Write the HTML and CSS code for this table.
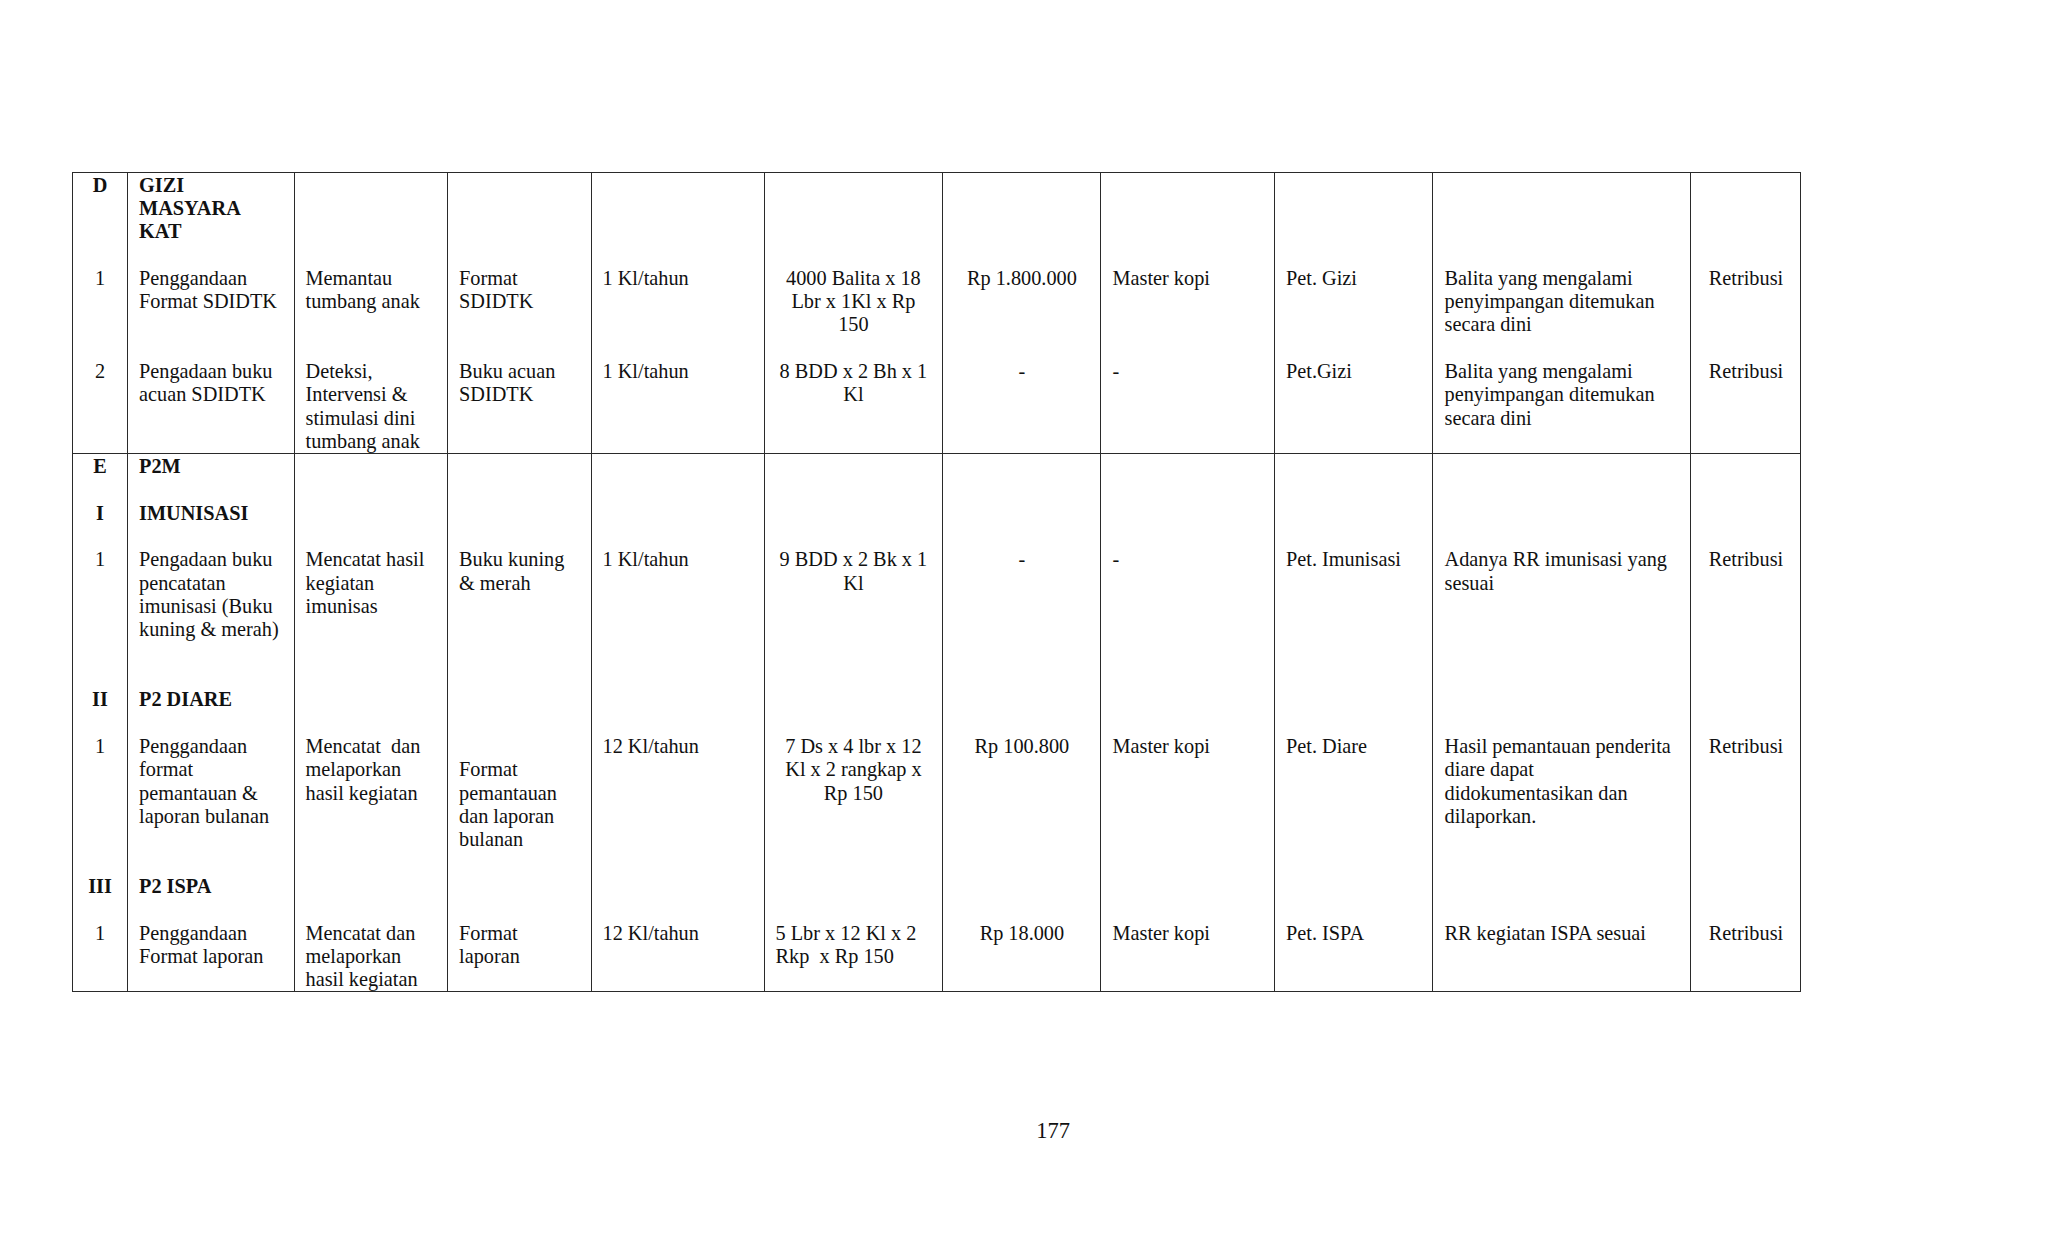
FILE: index.html
```html
<!DOCTYPE html>
<html lang="id">
<head>
<meta charset="utf-8">
<title>177</title>
<link rel="stylesheet" href="styles.css">
</head>
<body>
<div class="page">
<table class="plan">
<colgroup>
<col class="w1"><col class="w2"><col class="w3"><col class="w4"><col class="w5"><col class="w6"><col class="w7"><col class="w8"><col class="w9"><col class="w10"><col class="w11">
</colgroup>
<tbody>
<tr class="row-d">
<td class="c"><b>D</b><br><br><br><br>1<br><br><br><br>2</td>
<td><b>GIZI<br>MASYARA<br>KAT</b><br><br>Penggandaan<br>Format SDIDTK<br><br><br>Pengadaan buku<br>acuan SDIDTK</td>
<td><br><br><br><br>Memantau<br>tumbang anak<br><br><br>Deteksi,<br>Intervensi &amp;<br>stimulasi dini<br>tumbang anak</td>
<td><br><br><br><br>Format<br>SDIDTK<br><br><br>Buku acuan<br>SDIDTK</td>
<td><br><br><br><br>1 Kl/tahun<br><br><br><br>1 Kl/tahun</td>
<td class="c"><br><br><br><br>4000 Balita x 18<br>Lbr x 1Kl x Rp<br>150<br><br>8 BDD x 2 Bh x 1<br>Kl</td>
<td class="c"><br><br><br><br>Rp 1.800.000<br><br><br><br>-</td>
<td><br><br><br><br>Master kopi<br><br><br><br>-</td>
<td><br><br><br><br>Pet. Gizi<br><br><br><br>Pet.Gizi</td>
<td><br><br><br><br>Balita yang mengalami<br>penyimpangan ditemukan<br>secara dini<br><br>Balita yang mengalami<br>penyimpangan ditemukan<br>secara dini</td>
<td class="c"><br><br><br><br>Retribusi<br><br><br><br>Retribusi</td>
</tr>
<tr class="row-e">
<td class="c"><b>E</b><br><br><b>I</b><br><br>1<br><br><br><br><br><br><b>II</b><br><br>1<br><br><br><br><br><br><b>III</b><br><br>1</td>
<td><b>P2M</b><br><br><b>IMUNISASI</b><br><br>Pengadaan buku<br>pencatatan<br>imunisasi (Buku<br>kuning &amp; merah)<br><br><br><b>P2 DIARE</b><br><br>Penggandaan<br>format<br>pemantauan &amp;<br>laporan bulanan<br><br><br><b>P2 ISPA</b><br><br>Penggandaan<br>Format laporan</td>
<td><br><br><br><br>Mencatat hasil<br>kegiatan<br>imunisas<br><br><br><br><br><br>Mencatat&nbsp; dan<br>melaporkan<br>hasil kegiatan<br><br><br><br><br><br>Mencatat dan<br>melaporkan<br>hasil kegiatan</td>
<td><br><br><br><br>Buku kuning<br>&amp; merah<br><br><br><br><br><br><br><br>Format<br>pemantauan<br>dan laporan<br>bulanan<br><br><br><br>Format<br>laporan</td>
<td><br><br><br><br>1 Kl/tahun<br><br><br><br><br><br><br><br>12 Kl/tahun<br><br><br><br><br><br><br><br>12 Kl/tahun</td>
<td class="c"><br><br><br><br>9 BDD x 2 Bk x 1<br>Kl<br><br><br><br><br><br><br>7 Ds x 4 lbr x 12<br>Kl x 2 rangkap x<br>Rp 150<br><br><br><br><br><br><span class="l">5 Lbr x 12 Kl x 2<br>Rkp&nbsp; x Rp 150</span></td>
<td class="c"><br><br><br><br>-<br><br><br><br><br><br><br><br>Rp 100.800<br><br><br><br><br><br><br><br>Rp 18.000</td>
<td><br><br><br><br>-<br><br><br><br><br><br><br><br>Master kopi<br><br><br><br><br><br><br><br>Master kopi</td>
<td><br><br><br><br>Pet. Imunisasi<br><br><br><br><br><br><br><br>Pet. Diare<br><br><br><br><br><br><br><br>Pet. ISPA</td>
<td><br><br><br><br>Adanya RR imunisasi yang<br>sesuai<br><br><br><br><br><br><br>Hasil pemantauan penderita<br>diare dapat<br>didokumentasikan dan<br>dilaporkan.<br><br><br><br><br>RR kegiatan ISPA sesuai</td>
<td class="c"><br><br><br><br>Retribusi<br><br><br><br><br><br><br><br>Retribusi<br><br><br><br><br><br><br><br>Retribusi</td>
</tr>
</tbody>
</table>
<div class="pageno">177</div>
</div>
</body>
</html>
```
FILE: styles.css
```css
html, body {
  margin: 0;
  padding: 0;
  background: #ffffff;
}

.page {
  padding: 172px 0 0 72px;
  font-family: "Liberation Serif", "Times New Roman", serif;
  color: #111111;
}

.plan {
  border-collapse: collapse;
  table-layout: fixed;
  width: 1728px;
  font-size: 20.3px;
  line-height: 23.33px;
}

.w1 { width: 55px; }
.w2 { width: 166.5px; }
.w3 { width: 153.5px; }
.w4 { width: 143.5px; }
.w5 { width: 173px; }
.w6 { width: 178.8px; }
.w7 { width: 158.2px; }
.w8 { width: 173.5px; }
.w9 { width: 158.5px; }
.w10 { width: 258px; }
.w11 { width: 110px; }

.plan td {
  border: 1px solid #2a2a2a;
  vertical-align: top;
  padding: 0.5px 10px 0 11px;
  white-space: nowrap;
  text-align: left;
  overflow: hidden;
}

.plan td.c {
  text-align: center;
  padding-left: 10px;
  padding-right: 10px;
}

.plan td .l {
  display: block;
  text-align: left;
  margin-left: 1px;
}

.plan b {
  font-weight: bold;
}

.pageno {
  margin-left: 0;
  width: 1962px;
  margin-top: 126px;
  text-align: center;
  font-size: 22.5px;
  line-height: 26px;
}
```
